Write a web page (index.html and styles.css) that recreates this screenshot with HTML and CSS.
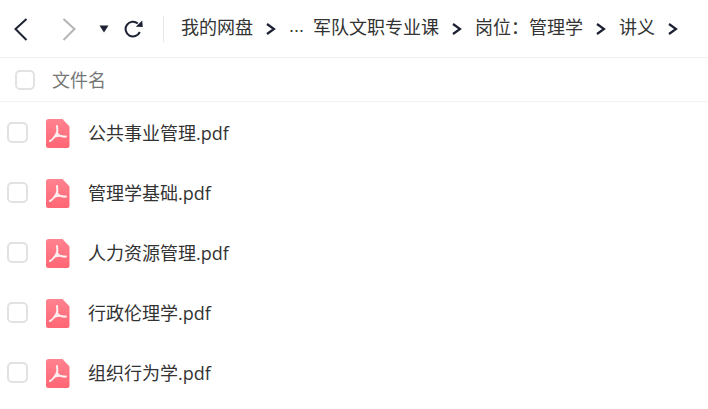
FILE: index.html

```html
<!DOCTYPE html>
<html lang="zh-CN">
<head>
    <meta charset="UTF-8">
    <meta name="viewport" content="width=device-width, initial-scale=1.0">
    <title>我的网盘</title>
    <link rel="stylesheet" href="styles.css">
</head>
<body>
    <!-- Path bar -->
    <div class="toolbar">
        <div class="nav">
            <svg class="nav-back" width="16" height="24" viewBox="0 0 16 24"><path d="M14.5 2 L3.5 12 L14.5 23" fill="none" stroke="#1c2233" stroke-width="2"/></svg>
            <svg class="nav-next" width="16" height="24" viewBox="0 0 16 24"><path d="M2.5 2 L13.5 12 L2.5 23" fill="none" stroke="#b4b4b4" stroke-width="2"/></svg>
            <svg class="nav-drop" width="10" height="8" viewBox="0 0 10 8"><path d="M0.5 0.5 H9.5 L5 7.5 Z" fill="#1c2233"/></svg>
            <svg class="nav-refresh" width="20" height="20" viewBox="0 0 20 20"><path d="M15.8 13 A7.4 7.4 0 1 1 13.8 4.4" fill="none" stroke="#1c2233" stroke-width="2"/><path d="M11.8 7.8 L18.8 8 L18.2 1.4 Z" fill="#1c2233"/></svg>
        </div>
        <div class="crumbs">
            <span class="crumb">我的网盘</span>
            <svg class="sep" width="10" height="12" viewBox="0 0 10 12"><path d="M1 1 L8 6 L1 11" fill="none" stroke="#1c2233" stroke-width="2.2"/></svg>
            <span class="crumb dots">...</span>
            <span class="crumb">军队文职专业课</span>
            <svg class="sep" width="10" height="12" viewBox="0 0 10 12"><path d="M1 1 L8 6 L1 11" fill="none" stroke="#1c2233" stroke-width="2.2"/></svg>
            <span class="crumb">岗位：管理学</span>
            <svg class="sep" width="10" height="12" viewBox="0 0 10 12"><path d="M1 1 L8 6 L1 11" fill="none" stroke="#1c2233" stroke-width="2.2"/></svg>
            <span class="crumb">讲义</span>
            <svg class="sep" width="10" height="12" viewBox="0 0 10 12"><path d="M1 1 L8 6 L1 11" fill="none" stroke="#1c2233" stroke-width="2.2"/></svg>
        </div>
    </div>

    <!-- Table head -->
    <div class="list-head">
        <span class="check check-head"></span>
        <span class="head-name">文件名</span>
    </div>

    <!-- File list -->
    <ul class="files">
        <li class="file">
            <span class="check"></span>
            <svg class="pdf" width="24" height="30" viewBox="0 0 24 30"><use href="#pdf-icon"/></svg>
            <span class="file-name">公共事业管理.pdf</span>
        </li>
        <li class="file">
            <span class="check"></span>
            <svg class="pdf" width="24" height="30" viewBox="0 0 24 30"><use href="#pdf-icon"/></svg>
            <span class="file-name">管理学基础.pdf</span>
        </li>
        <li class="file">
            <span class="check"></span>
            <svg class="pdf" width="24" height="30" viewBox="0 0 24 30"><use href="#pdf-icon"/></svg>
            <span class="file-name">人力资源管理.pdf</span>
        </li>
        <li class="file">
            <span class="check"></span>
            <svg class="pdf" width="24" height="30" viewBox="0 0 24 30"><use href="#pdf-icon"/></svg>
            <span class="file-name">行政伦理学.pdf</span>
        </li>
        <li class="file">
            <span class="check"></span>
            <svg class="pdf" width="24" height="30" viewBox="0 0 24 30"><use href="#pdf-icon"/></svg>
            <span class="file-name">组织行为学.pdf</span>
        </li>
    </ul>

    <svg class="defs" width="0" height="0">
        <defs>
            <linearGradient id="pdf-fill" x1="0" y1="0" x2="0" y2="1">
                <stop offset="0" stop-color="#ff8290"/>
                <stop offset="1" stop-color="#ff6674"/>
            </linearGradient>
            <symbol id="pdf-icon" viewBox="0 0 24 30">
                <path d="M2.5 0 H16.5 L23.5 7.5 V26.5 A2.5 2.5 0 0 1 21 29 H2.5 A2.5 2.5 0 0 1 0 26.5 V2.5 A2.5 2.5 0 0 1 2.5 0 Z" fill="url(#pdf-fill)"/>
                <path d="M11 7 C11.5 11 12 14 8 18.5 C6.5 20.5 5 21.5 4 22 M11.5 14.5 C13.5 17.5 16 18 20 17.5 M9 17.5 C11.5 16.5 14 16.5 16 17" fill="none" stroke="#fff" stroke-width="2" stroke-linecap="round" opacity="0.88"/>
            </symbol>
        </defs>
    </svg>
</body>
</html>
```

FILE: styles.css

```css
* {
    margin: 0;
    padding: 0;
    box-sizing: border-box;
}

body {
    font-family: "Open Sans", "Noto Sans CJK SC", sans-serif;
    background-color: #fff;
    color: #333;
    overflow: hidden;
}

.toolbar {
    display: flex;
    align-items: center;
    height: 58px;
    border-bottom: 1px solid #f0f0f0;
    padding-left: 12px;
}

.nav {
    display: flex;
    align-items: center;
    height: 26px;
    width: 152px;
    border-right: 1px solid #e6e6e6;
}

.nav-next {
    margin-left: 33px;
}

.nav-drop {
    margin-left: 22px;
}

.nav-refresh {
    margin-left: 15px;
}

.crumbs {
    display: flex;
    align-items: center;
    margin-left: 17px;
    font-size: 18px;
    white-space: nowrap;
}

.crumb {
    margin-bottom: 5px;
}

.sep {
    margin: 1px 13px 0 13px;
}

.dots {
    margin-right: 9px;
    font-family: "Liberation Sans", sans-serif;
}

.list-head {
    display: flex;
    align-items: center;
    height: 44px;
    border-bottom: 1px solid #f3f3f3;
    padding-left: 15px;
}

.head-name {
    margin-left: 17px;
    margin-bottom: 2px;
    font-size: 18px;
    color: #777;
}

.check {
    width: 21px;
    height: 21px;
    border: 2px solid #e2e2e2;
    border-radius: 5px;
    flex-shrink: 0;
}

.check-head {
    width: 20px;
    height: 20px;
}

.files {
    list-style: none;
}

.file {
    display: flex;
    align-items: center;
    height: 60px;
    padding-left: 7px;
}

.pdf {
    margin-left: 18px;
    margin-top: 3px;
}

.file-name {
    margin-left: 18px;
    font-size: 18px;
}

.defs {
    position: absolute;
}
```
